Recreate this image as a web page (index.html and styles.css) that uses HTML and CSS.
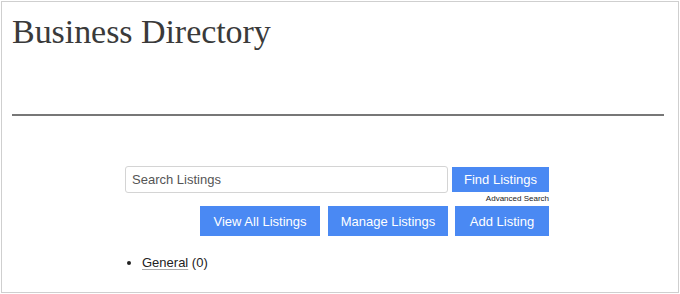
FILE: index.html
```html
<!DOCTYPE html>
<html>
<head>
<meta charset="utf-8">
<link rel="stylesheet" href="styles.css">
</head>
<body>
<div class="frame">
  <header class="page-head">
    <h1 class="title">Business Directory</h1>
    <div class="rule"></div>
  </header>
  <main class="directory">
    <div class="search-row">
      <input class="search-input" type="text" placeholder="Search Listings">
      <div class="search-side">
        <button class="btn btn-find">Find Listings</button>
        <a class="adv-link" href="#">Advanced Search</a>
      </div>
    </div>
    <div class="action-row">
      <button class="btn btn-action btn-view">View All Listings</button>
      <button class="btn btn-action btn-manage">Manage Listings</button>
      <button class="btn btn-action btn-add">Add Listing</button>
    </div>
    <ul class="cats">
      <li><a href="#" class="cat-link">General</a> (0)</li>
    </ul>
  </main>
</div>
</body>
</html>
```
FILE: styles.css
```css
html, body {
  margin: 0;
  padding: 0;
  background: #fff;
}
body {
  width: 680px;
  height: 294px;
  overflow: hidden;
  font-family: "Liberation Sans", Arial, sans-serif;
}
.frame {
  margin: 1px;
  width: 678px;
  height: 292px;
  box-sizing: border-box;
  border: 1px solid #cfcfcf;
  padding: 0 14px 0 10px;
}
.page-head {
  display: flex;
  flex-direction: column;
}
.title {
  margin: 10px 0 0 0;
  font-family: "Liberation Serif", "Times New Roman", serif;
  font-weight: normal;
  font-size: 34px;
  line-height: 40px;
  color: #3a3a3a;
  letter-spacing: -0.05px;
}
.rule {
  margin-top: 62px;
  height: 2px;
  background: #777;
}
.directory {
  width: 424px;
  margin: 50px auto 0 auto;
  position: relative;
  left: -1px;
}
.search-row {
  display: flex;
  gap: 4px;
}
.search-input {
  width: 324px;
  height: 27px;
  box-sizing: border-box;
  border: 1px solid #d4d4d4;
  border-radius: 3px;
  padding: 0 6px;
  font-family: "Liberation Sans", Arial, sans-serif;
  font-size: 13px;
  color: #333;
  outline: none;
}
.search-input::placeholder {
  color: #555;
}
.search-side {
  display: flex;
  flex-direction: column;
  align-items: flex-end;
  flex: 1;
}
.btn {
  border: none;
  background: #4a89f3;
  color: #fff;
  font-family: "Liberation Sans", Arial, sans-serif;
  font-size: 13px;
  padding: 0;
  cursor: pointer;
}
.btn-find {
  width: 97px;
  height: 25px;
  margin-top: 1px;
}
.adv-link {
  font-size: 8px;
  color: #222;
  text-decoration: none;
  margin-top: 2px;
  line-height: 9px;
}
.action-row {
  display: flex;
  justify-content: flex-end;
  gap: 8px;
  margin-top: 3px;
}
.btn-action {
  height: 30px;
}
.btn-view { width: 120px; }
.btn-manage { width: 120px; }
.btn-add { width: 94px; margin-left: -1px; }
.cats {
  margin: 19px 0 0 0;
  padding-left: 17px;
  font-size: 13px;
  color: #222;
  line-height: 16px;
}
.cat-link {
  color: #222;
  text-decoration: underline;
  text-decoration-color: #aaa;
  text-underline-offset: 2px;
}
```
